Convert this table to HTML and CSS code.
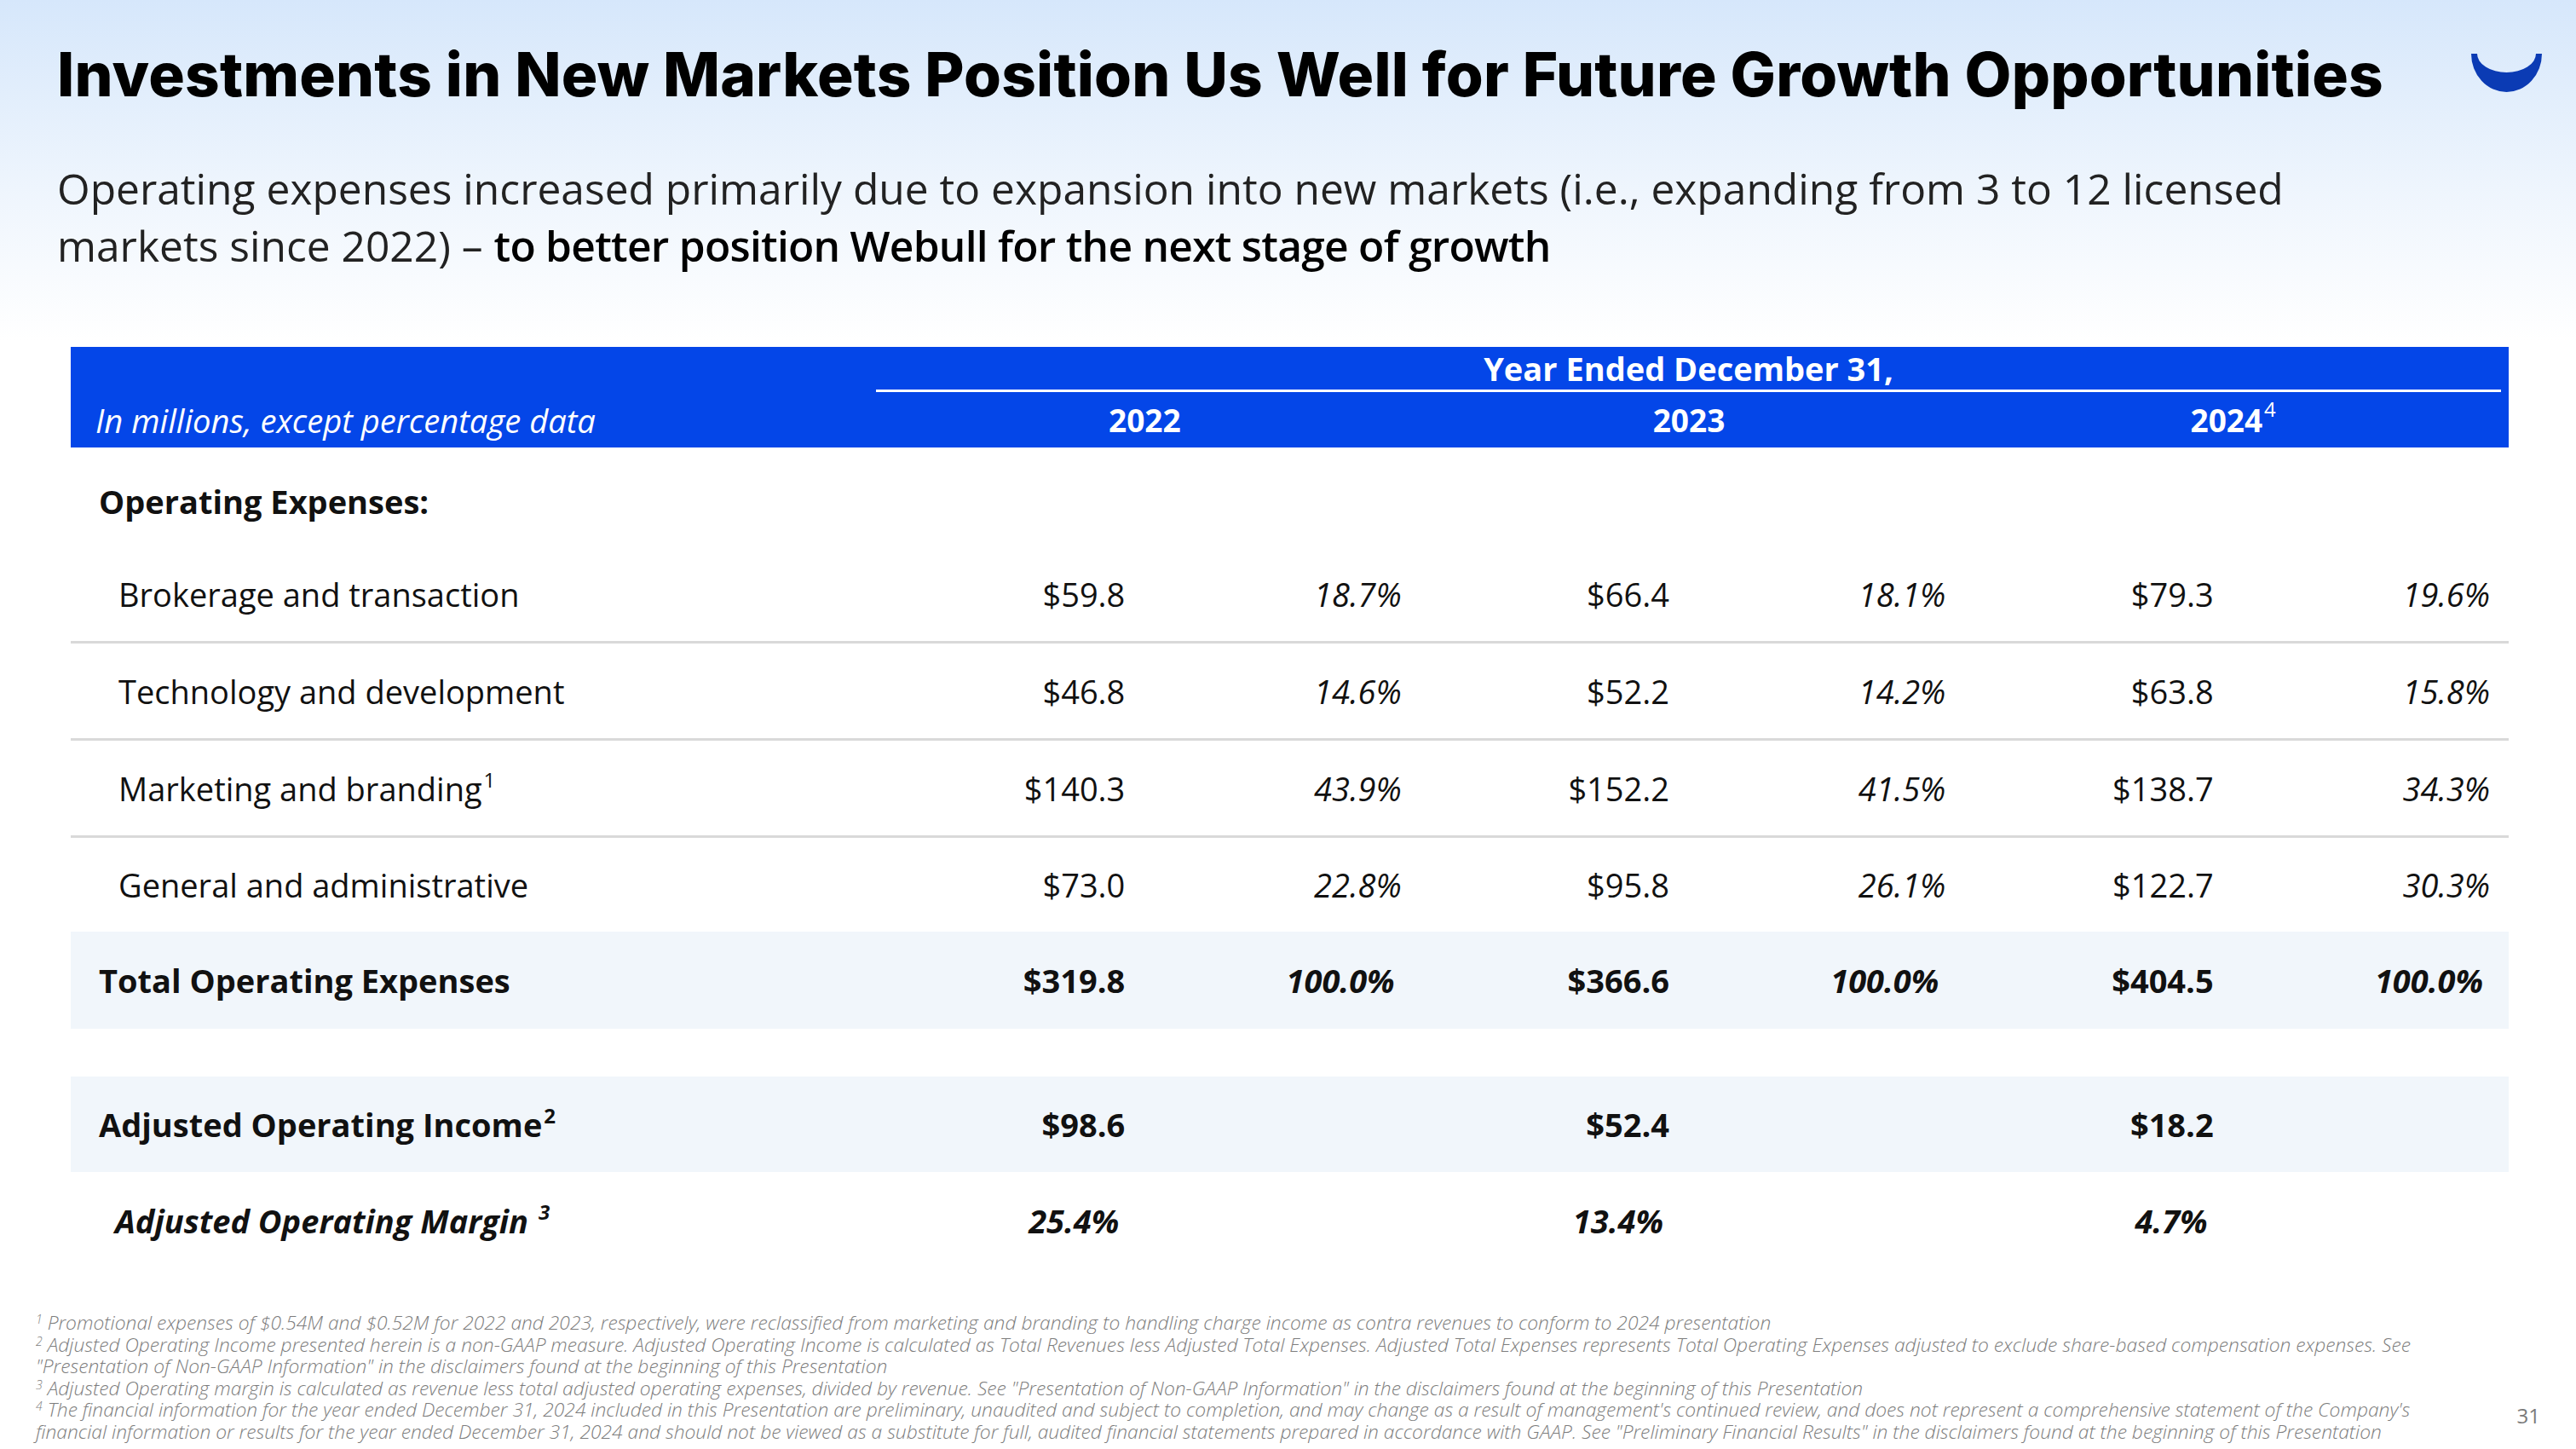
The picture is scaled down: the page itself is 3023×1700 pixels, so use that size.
FILE: index.html
```html
<!DOCTYPE html>
<html lang="en">
<head>
<meta charset="utf-8">
<title>Investments in New Markets</title>
<link rel="stylesheet" href="styles.css">
</head>
<body>
<div class="slide">
  <header class="top">
    <h1 class="title">Investments in New Markets Position Us Well for Future Growth Opportunities</h1>
    <svg class="logo" viewBox="0 0 90 50" width="90" height="50" aria-label="Webull">
      <path d="M2,2 A41.5,45 0 0 0 85,2 L78,2 A34.5,22 0 0 1 9,2 Z" fill="#0b3bb4"/>
    </svg>
  </header>

  <p class="subtitle">Operating expenses increased primarily due to expansion into new markets (i.e., expanding from 3 to 12 licensed markets since 2022) – <span class="emph">to better position Webull for the next stage of growth</span></p>

  <div class="table">
    <div class="thead">
      <div class="th-top">
        <div class="th-span">Year Ended December 31,</div>
      </div>
      <div class="th-bottom">
        <div class="th-label">In millions, except percentage data</div>
        <div class="th-year">2022</div>
        <div class="th-year">2023</div>
        <div class="th-year">2024<sup class="hsup">4</sup></div>
      </div>
    </div>

    <div class="row section">
      <div class="label bold">Operating Expenses:</div>
    </div>

    <div class="row line">
      <div class="label item">Brokerage and transaction</div>
      <div class="val">$59.8</div><div class="pct">18.7%</div>
      <div class="val">$66.4</div><div class="pct">18.1%</div>
      <div class="val">$79.3</div><div class="pct">19.6%</div>
    </div>
    <div class="row line">
      <div class="label item">Technology and development</div>
      <div class="val">$46.8</div><div class="pct">14.6%</div>
      <div class="val">$52.2</div><div class="pct">14.2%</div>
      <div class="val">$63.8</div><div class="pct">15.8%</div>
    </div>
    <div class="row line">
      <div class="label item">Marketing and branding<sup class="rsup">1</sup></div>
      <div class="val">$140.3</div><div class="pct">43.9%</div>
      <div class="val">$152.2</div><div class="pct">41.5%</div>
      <div class="val">$138.7</div><div class="pct">34.3%</div>
    </div>
    <div class="row last">
      <div class="label item">General and administrative</div>
      <div class="val">$73.0</div><div class="pct">22.8%</div>
      <div class="val">$95.8</div><div class="pct">26.1%</div>
      <div class="val">$122.7</div><div class="pct">30.3%</div>
    </div>

    <div class="row total shaded">
      <div class="label bold">Total Operating Expenses</div>
      <div class="val bold">$319.8</div><div class="pct bold pct-b">100.0%</div>
      <div class="val bold">$366.6</div><div class="pct bold pct-b">100.0%</div>
      <div class="val bold">$404.5</div><div class="pct bold pct-b">100.0%</div>
    </div>

    <div class="spacer"></div>

    <div class="row adj shaded">
      <div class="label bold">Adjusted Operating Income<sup class="rsup">2</sup></div>
      <div class="val bold">$98.6</div><div class="pct"></div>
      <div class="val bold">$52.4</div><div class="pct"></div>
      <div class="val bold">$18.2</div><div class="pct"></div>
    </div>

    <div class="row margin">
      <div class="label bold ital margin-label">Adjusted Operating Margin <sup class="rsup">3</sup></div>
      <div class="val bold ital mval">25.4%</div><div class="pct"></div>
      <div class="val bold ital mval">13.4%</div><div class="pct"></div>
      <div class="val bold ital mval">4.7%</div><div class="pct"></div>
    </div>
  </div>

  <footer class="foot">
    <div class="notes">
      <p><span class="fn">1</span> Promotional expenses of $0.54M and $0.52M for 2022 and 2023, respectively, were reclassified from marketing and branding to handling charge income as contra revenues to conform to 2024 presentation</p>
      <p><span class="fn">2</span> Adjusted Operating Income presented herein is a non-GAAP measure. Adjusted Operating Income is calculated as Total Revenues less Adjusted Total Expenses. Adjusted Total Expenses represents Total Operating Expenses adjusted to exclude share-based compensation expenses. See "Presentation of Non-GAAP Information" in the disclaimers found at the beginning of this Presentation</p>
      <p><span class="fn">3</span> Adjusted Operating margin is calculated as revenue less total adjusted operating expenses, divided by revenue. See "Presentation of Non-GAAP Information" in the disclaimers found at the beginning of this Presentation</p>
      <p><span class="fn">4</span> The financial information for the year ended December 31, 2024 included in this Presentation are preliminary, unaudited and subject to completion, and may change as a result of management's continued review, and does not represent a comprehensive statement of the Company's financial information or results for the year ended December 31, 2024 and should not be viewed as a substitute for full, audited financial statements prepared in accordance with GAAP. See "Preliminary Financial Results" in the disclaimers found at the beginning of this Presentation</p>
    </div>
    <div class="pagenum">31</div>
  </footer>
</div>
</body>
</html>
```

FILE: styles.css
```css
* { box-sizing: border-box; }

html, body {
  margin: 0;
  padding: 0;
}

body {
  font-family: "Open Sans", "Noto Sans", sans-serif;
  color: #111;
}

.slide {
  width: 3023px;
  height: 1700px;
  overflow: hidden;
  background: linear-gradient(to bottom, #d6e7fb 0px, #eef5fd 220px, #ffffff 400px);
}

/* ---------- header ---------- */
.top {
  display: flex;
  align-items: flex-start;
  justify-content: space-between;
  padding: 47px 35px 0 67px;
}

.title {
  margin: 0;
  font-family: "Inter", "Liberation Sans", sans-serif;
  font-weight: 800;
  font-size: 71px;
  line-height: 80px;
  letter-spacing: 0.2px;
  color: #000;
  white-space: nowrap;
}

.logo {
  display: block;
  margin-top: 14px;
  flex: none;
}

.subtitle {
  margin: 61px 0 0 67px;
  width: 2700px;
  font-size: 49.7px;
  line-height: 67px;
  color: #222;
}

.emph {
  font-weight: 600;
  letter-spacing: -0.75px;
  color: #000;
}

/* ---------- table ---------- */
.table {
  margin: 85px 0 0 83px;
  width: 2861px;
}

.thead {
  background: #0446e8;
  color: #fff;
}

.th-top {
  display: grid;
  grid-template-columns: 945px 1fr;
  height: 53px;
}

.th-span {
  grid-column: 2;
  margin-right: 9px;
  border-bottom: 3px solid #fff;
  text-align: center;
  font-weight: 700;
  font-size: 38px;
  line-height: 50px;
}

.th-bottom {
  display: grid;
  grid-template-columns: 945px repeat(3, 1fr);
  height: 65px;
  align-items: center;
  font-size: 38px;
  line-height: 52px;
}

.th-label {
  padding-left: 29px;
  font-style: italic;
  font-size: 38.2px;
}

.th-year {
  text-align: center;
  font-weight: 700;
  font-size: 37px;
  padding-right: 8px;
}

.hsup {
  font-size: 24px;
  font-weight: 400;
  vertical-align: 18px;
  line-height: 0;
  margin-left: 2px;
}

.row {
  display: grid;
  grid-template-columns: 945px repeat(6, 1fr);
  align-items: center;
  font-size: 38px;
  line-height: 52px;
  color: #111;
}

.section {
  height: 116px;
  padding-top: 10px;
}

.line {
  height: 114px;
  border-bottom: 3px solid #d9d9d9;
}

.last {
  height: 110px;
}

.total {
  height: 114px;
}

.shaded {
  background: #f1f6fb;
}

.spacer {
  height: 56px;
}

.adj {
  height: 112px;
}

.margin {
  height: 114px;
}

.label {
  padding-left: 33px;
  white-space: nowrap;
}

.label.item {
  padding-left: 56px;
}

.margin-label {
  padding-left: 52px;
}

.bold {
  font-weight: 700;
}

.ital {
  font-style: italic;
}

.val {
  text-align: right;
  padding-right: 27px;
}

.pct {
  text-align: right;
  padding-right: 22px;
  font-style: italic;
}

.pct-b {
  padding-right: 30px;
}

.mval {
  padding-right: 34px;
}

.rsup {
  font-size: 24px;
  vertical-align: 16px;
  line-height: 0;
  margin-left: 2px;
}

/* ---------- footnotes ---------- */
.foot {
  display: flex;
  align-items: flex-end;
  margin-top: 50px;
  padding: 0 42px 0 42px;
}

.notes {
  width: 2850px;
  flex: none;
  font-size: 22.8px;
  line-height: 25.6px;
  font-style: italic;
  font-weight: 300;
  color: #7d7d7d;
}

.notes p {
  margin: 0;
}

.fn {
  font-size: 14px;
  line-height: 0;
  vertical-align: 7px;
}

.pagenum {
  flex: none;
  margin-left: auto;
  font-size: 24px;
  color: #7a7a7a;
  margin-bottom: 16px;
}
```
